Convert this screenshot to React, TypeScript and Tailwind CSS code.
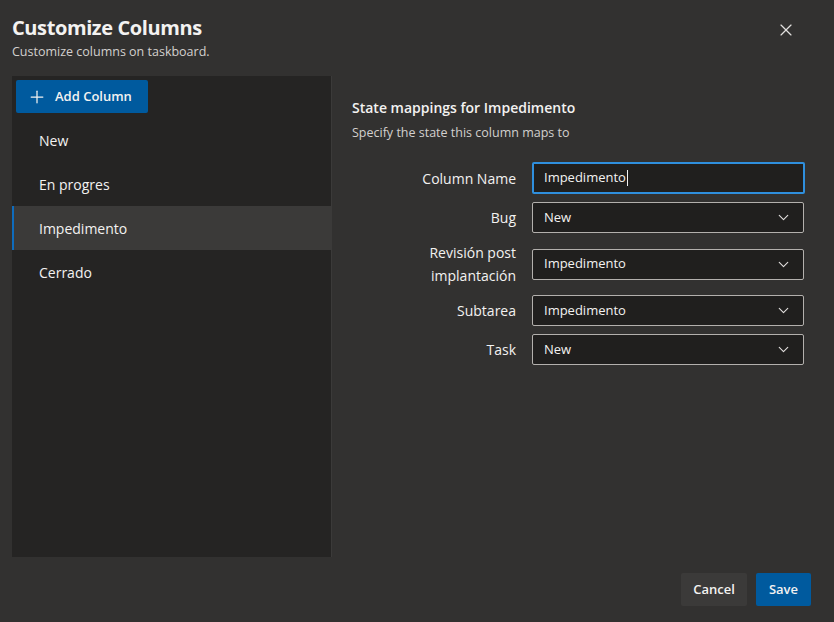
import { Plus, X, ChevronDown } from 'lucide-react'

const columns = ['New', 'En progres', 'Impedimento', 'Cerrado']

const mappings = [
  { label: 'Bug', value: 'New' },
  { label: 'Revisión post implantación', value: 'Impedimento' },
  { label: 'Subtarea', value: 'Impedimento' },
  { label: 'Task', value: 'New' },
]

function SelectBox({ value }: { value: string }) {
  return (
    <div className="flex h-[31px] w-[272px] items-center justify-between rounded-[2px] border border-[#b3b0ad] bg-[#201f1e] pl-[11px] pr-[11px] text-[13px] text-[#f3f2f1]">
      <span>{value}</span>
      <ChevronDown size={17} strokeWidth={1.6} className="text-[#e1dfdd]" />
    </div>
  )
}

export default function App() {
  const selected = 'Impedimento'

  return (
    <div
      className="flex h-[622px] w-[834px] flex-col bg-[#323130] text-[#f3f2f1]"
      style={{ fontFamily: '"Open Sans", "Noto Sans", sans-serif' }}
    >
      {/* Header */}
      <div className="flex items-start justify-between pl-3 pr-[38px] pt-[14px]">
        <div>
          <h1 className="text-[20px] font-bold leading-[28px] tracking-[-0.4px]">Customize Columns</h1>
          <p className="mt-[1px] text-[12.5px] leading-[18px] text-[#d2d0ce]">Customize columns on taskboard.</p>
        </div>
        <X size={20} strokeWidth={1.4} className="mt-[6px] text-[#e1dfdd]" />
      </div>

      {/* Body */}
      <div className="mt-[15px] flex h-[481px]">
        <div className="ml-3 flex w-[320px] flex-col border-r border-[#3b3a39] bg-[#252423]">
          <div className="px-1 pt-1">
            <button className="flex h-[33px] items-center gap-[8px] rounded-[2px] bg-[#005a9e] pl-[11px] pr-[16px] text-[13px] font-semibold">
              <Plus size={20} strokeWidth={1.5} />
              Add Column
            </button>
          </div>
          <ul className="mt-[5px]">
            {columns.map((c) =>
              c === selected ? (
                <li key={c} className="flex h-[44px] items-center border-l-2 border-[#0f6cbd] bg-[#3b3a39] pl-[25px] text-[14px]">
                  {c}
                </li>
              ) : (
                <li key={c} className="flex h-[44px] items-center pl-[27px] text-[14px]">
                  {c}
                </li>
              )
            )}
          </ul>
        </div>

        <div className="flex-1 pl-[20px] pt-[22px]">
          <h2 className="text-[14px] font-semibold leading-[20px]">State mappings for Impedimento</h2>
          <p className="mt-[6px] text-[12.5px] leading-[18px] text-[#d2d0ce]">Specify the state this column maps to</p>

          <div className="mt-[20px] flex flex-col gap-[8px]">
            <div className="flex items-center gap-[16px]">
              <label className="w-[164px] text-right text-[14px]">Column Name</label>
              <div className="flex h-[32px] w-[273px] items-center rounded-[2px] border-2 border-[#2f8fdd] bg-[#201f1e] pl-[10px] text-[13px]">
                Impedimento
                <span className="ml-[1px] h-[16px] w-px bg-[#f3f2f1]" />
              </div>
            </div>
            {mappings.map((m) => (
              <div key={m.label} className="flex items-center gap-[16px]">
                <label className="w-[164px] pl-[60px] text-right text-[14px] leading-[23px]">{m.label}</label>
                <SelectBox value={m.value} />
              </div>
            ))}
          </div>
        </div>
      </div>

      {/* Footer */}
      <div className="mt-[16px] flex justify-end gap-[9px] pr-[23px]">
        <button className="h-[33px] rounded-[2px] bg-[#3b3a39] px-[12px] text-[13px] font-semibold">Cancel</button>
        <button className="h-[33px] rounded-[2px] bg-[#005a9e] px-[13px] text-[13px] font-semibold">Save</button>
      </div>
    </div>
  )
}
